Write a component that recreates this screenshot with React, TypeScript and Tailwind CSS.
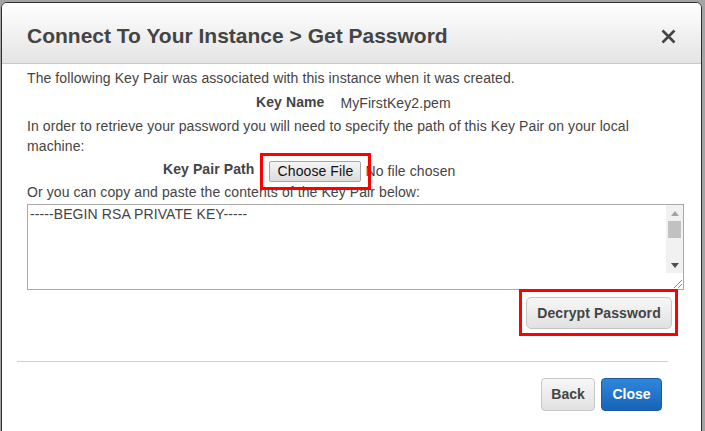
import React from 'react';

const CloseIcon: React.FC = () => (
  <svg width="15" height="15" viewBox="0 0 15 15" className="block">
    <path d="M1.5 1.5 L13.5 13.5 M13.5 1.5 L1.5 13.5" stroke="#444" strokeWidth="2.6" strokeLinecap="butt" />
  </svg>
);

const FakeScrollbar: React.FC = () => (
  <div className="w-[17px] flex flex-col">
    <div className="flex-1 bg-[#f1f1f1] flex flex-col">
      <div className="h-[16px] flex items-center justify-center">
        <svg width="8" height="5" viewBox="0 0 8 5"><path d="M0 5 L4 0 L8 5 Z" fill="#a3a3a3" /></svg>
      </div>
      <div className="mx-[2px] h-[17px] bg-[#c1c1c1]" />
      <div className="flex-1" />
      <div className="h-[16px] flex items-center justify-center">
        <svg width="8" height="5" viewBox="0 0 8 5"><path d="M0 0 L8 0 L4 5 Z" fill="#505050" /></svg>
      </div>
    </div>
    <div className="h-[16px] bg-white relative">
      <svg width="16" height="16" viewBox="0 0 16 16" className="absolute right-0 bottom-0">
        <path d="M15 7 L7 15 M15 11 L11 15" stroke="#8a8a8a" strokeWidth="1" />
      </svg>
    </div>
  </div>
);

export default function App() {
  return (
    <div className="w-[705px] h-[431px] overflow-hidden bg-[#a4a4a4] pt-[2px] pl-[1px] font-['Liberation_Sans',Arial,sans-serif]">
      <div className="w-[701px] h-[440px] bg-white border border-[#2e2e2e] rounded-t-[6px] overflow-hidden">
        {/* header */}
        <div className="h-[61px] bg-gradient-to-b from-white to-[#e4e4e4] border-b border-[#c9c9c9] flex items-center justify-between pl-[25px] pr-[25px] pt-[6px]">
          <h3 className="text-[21px] font-bold text-[#444]">Connect To Your Instance &gt; Get Password</h3>
          <button className="w-[15px] h-[15px]">
            <CloseIcon />
          </button>
        </div>

        {/* body */}
        <div className="pl-[25px] pr-[17px] pt-[4px] text-[14px] text-[#444] tracking-[0.09px]">
          <p className="leading-[20px]">The following Key Pair was associated with this instance when it was created.</p>
          <div className="mt-[4px] flex items-end leading-[20px] pl-[229px]">
            <span className="font-bold">Key Name</span>
            <span className="ml-[16px] translate-y-[1px]">MyFirstKey2.pem</span>
          </div>
          <p className="mt-[4px] leading-[20px]">
            In order to retrieve your password you will need to specify the path of this Key Pair on your local<br />
            machine:
          </p>
          <div className="h-[26px] flex items-center pl-[136px] pt-[4px]">
            <span className="font-bold -translate-y-[2px]">Key Pair Path</span>
            <div className="relative ml-[15px]">
              <button className="w-[92px] h-[21px] bg-gradient-to-b from-[#f4f4f4] to-[#dddddd] border border-[#a6a6a6] rounded-[2px] text-[14px] text-[#111] leading-[19px]">
                Choose File
              </button>
              <div className="absolute -left-[9px] -right-[10px] -top-[8px] -bottom-[8px] border-[3px] border-[#ff0000]" />
            </div>
            <span className="ml-[4px]">No file chosen</span>
          </div>
          <p className="leading-[20px]">Or you can copy and paste the contents of the Key Pair below:</p>

          <div className="mt-[2px] h-[86px] border border-[#a9a9a9] flex">
            <div className="flex-1 pl-[2px] pt-[1px] leading-[16px]">-----BEGIN RSA PRIVATE KEY-----</div>
            <FakeScrollbar />
          </div>

          <div className="mt-[7px] flex justify-end pr-[12px]">
            <div className="relative">
              <button className="w-[146px] h-[32px] bg-gradient-to-b from-[#f7f7f7] to-[#e1e1e1] border border-[#c6c6c6] rounded-[5px] font-bold text-[14px] text-[#444]">
                Decrypt Password
              </button>
              <div className="absolute -left-[7px] -right-[6px] -top-[8px] -bottom-[7px] border-[3px] border-[#ff0000]" />
            </div>
          </div>
        </div>

        {/* footer */}
        <div className="mt-[32px] ml-[15px] mr-[33px] h-px bg-[#cfcfcf]" />
        <div className="mt-[16px] flex justify-end gap-[6px] pr-[39px]">
          <button className="w-[54px] h-[33px] bg-gradient-to-b from-[#f7f7f7] to-[#e1e1e1] border border-[#c6c6c6] rounded-[4px] font-bold text-[14px] text-[#444]">
            Back
          </button>
          <button className="w-[61px] h-[33px] bg-gradient-to-b from-[#2f86dc] to-[#1764b8] border border-[#1a5aa3] rounded-[4px] font-bold text-[14px] text-white">
            Close
          </button>
        </div>
      </div>
    </div>
  );
}
